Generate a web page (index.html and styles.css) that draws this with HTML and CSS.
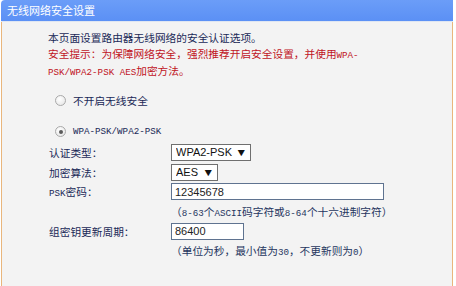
FILE: index.html
```html
<!DOCTYPE html>
<html lang="zh-CN">
<head>
    <meta charset="UTF-8">
    <title>无线网络安全设置</title>
    <link rel="stylesheet" href="styles.css">
</head>
<body>
    <div class="panel">
        <div class="panel-title">无线网络安全设置</div>

        <div class="panel-body">
            <p class="intro">本页面设置路由器无线网络的安全认证选项。</p>
            <p class="warn">安全提示：为保障网络安全，强烈推荐开启安全设置，并使用<span class="en">WPA-</span><br><span class="en">PSK/WPA2-PSK AES</span>加密方法。</p>

            <div class="option">
                <span class="radio"></span>
                <span>不开启无线安全</span>
            </div>
            <div class="option option-gap">
                <span class="radio checked"></span>
                <span class="en">WPA-PSK/WPA2-PSK</span>
            </div>

            <div class="form">
                <div class="label">认证类型：</div>
                <div class="field">
                    <span class="select">
                        <select class="select-auth">
                            <option>WPA2-PSK</option>
                            <option>WPA-PSK</option>
                            <option>自动</option>
                        </select>
                        <span class="arrow">▼</span>
                    </span>
                </div>

                <div class="label">加密算法：</div>
                <div class="field">
                    <span class="select">
                        <select class="select-enc">
                            <option>AES</option>
                            <option>TKIP</option>
                        </select>
                        <span class="arrow">▼</span>
                    </span>
                </div>

                <div class="label"><span class="en">PSK</span>密码：</div>
                <div class="field">
                    <input class="text text-psk" type="text" value="12345678">
                </div>

                <div></div>
                <div class="hint">（<span class="en">8-63</span>个<span class="en">ASCII</span>码字符或<span class="en">8-64</span>个十六进制字符）</div>

                <div class="label">组密钥更新周期：</div>
                <div class="field">
                    <input class="text text-period" type="text" value="86400">
                </div>

                <div></div>
                <div class="hint">（单位为秒，最小值为<span class="en">30</span>，不更新则为<span class="en">0</span>）</div>
            </div>
        </div>
    </div>
</body>
</html>
```

FILE: styles.css
```css
* {
    margin: 0;
    padding: 0;
    box-sizing: border-box;
}

body {
    background-color: #FFF;
    font-family: "Noto Sans CJK SC", sans-serif;
    font-size: 10.7px;
    color: #1a2957;
}

.panel {
    width: 452px;
    height: 286px;
    margin-left: 1px;
    display: flex;
    flex-direction: column;
}

.panel-title {
    height: 22px;
    padding-left: 6px;
    line-height: 21px;
    font-size: 11px;
    color: #FFF;
    background: linear-gradient(#6b9df8, #5b90f5);
    border-top-left-radius: 4px;
    border-bottom: 1px solid #dfe6f2;
}

.panel-body {
    flex: 1;
    padding: 8px 0 0 46px;
    background-color: #f3f3f3;
    border-left: 1px solid #e9b67c;
    border-right: 1px solid #e9b67c;
}

.en {
    font-family: "Liberation Mono", monospace;
    font-size: 9.2px;
}

.intro,
.warn {
    line-height: 15.5px;
}

.warn {
    color: #c0141e;
}

.option {
    display: flex;
    align-items: center;
    height: 20px;
    margin-top: 10px;
    padding-left: 7px;
}

.option-gap {
    margin-top: 11px;
}

.radio {
    width: 11px;
    height: 11px;
    margin-right: 7px;
    border: 1px solid #a9a9a9;
    border-radius: 50%;
    background: radial-gradient(circle at 40% 35%, #fff, #e2e2e2);
    display: flex;
    justify-content: center;
    align-items: center;
}

.radio.checked::after {
    content: "";
    width: 4px;
    height: 4px;
    border-radius: 50%;
    background-color: #5a5a5a;
}

.form {
    display: grid;
    grid-template-columns: 123px auto;
    grid-auto-rows: 19.7px;
    margin-top: 1px;
    align-items: center;
}

.label {
    padding-left: 1px;
}

.field {
    display: flex;
}

.select {
    position: relative;
    display: inline-flex;
}

.select select {
    appearance: none;
    height: 17px;
    padding-left: 4px;
    border: 1px solid #6f6f6f;
    border-radius: 0;
    background-color: #FFF;
    font-family: "Liberation Sans", sans-serif;
    font-size: 11px;
    color: #111;
    outline: none;
}

.select .arrow {
    position: absolute;
    top: 0;
    right: 6px;
    line-height: 17px;
    font-size: 7.5px;
    color: #111;
    pointer-events: none;
}

.select-auth {
    width: 80px;
}

.select-enc {
    width: 47px;
}

.text {
    height: 17px;
    padding-left: 3px;
    border: 1px solid #5f7390;
    background-color: #FFF;
    font-family: "Liberation Sans", sans-serif;
    font-size: 11px;
    color: #222;
    outline: none;
}

.text-psk {
    width: 213px;
}

.text-period {
    width: 73px;
}

.hint {
    color: #26365f;
}
```
